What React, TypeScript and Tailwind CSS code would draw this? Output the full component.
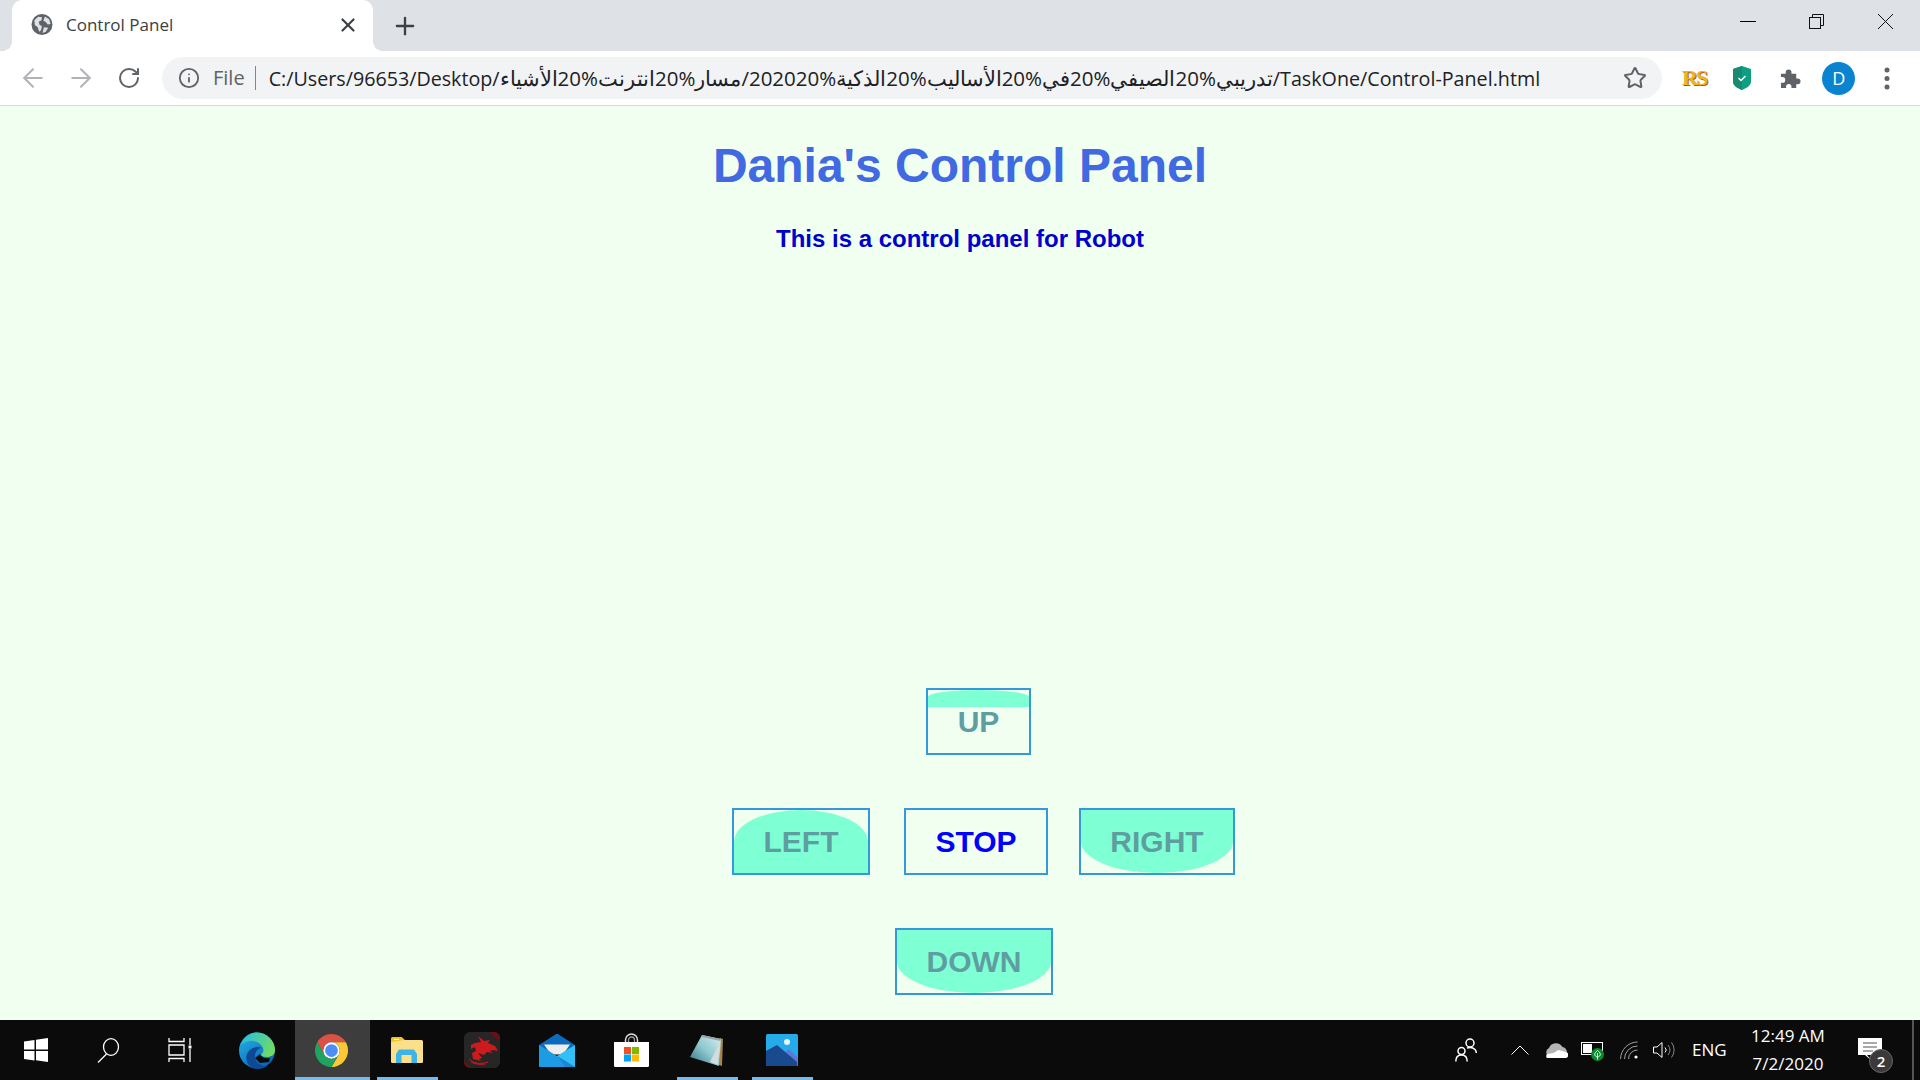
import React from 'react'
import { ArrowLeft, ArrowRight, Info, Plus, RotateCw, Star, X } from 'lucide-react'

const sans = "font-['Open_Sans',sans-serif]"
const arial = "font-['Liberation_Sans',Arial,sans-serif]"

const GlobeIcon = () => (
  <svg width="22" height="21" viewBox="0 0 22 22">
    <circle cx="11" cy="11" r="11" fill="#5f6368" />
    <path d="M3 6.5l4-3.500 4 .5-.5 3-3 1.500 1 3.500 2.500 1-1 4.500-2 1.500-1.500-4.500-3-2.500zM14 2.500l4.500 3 1.500 5-3 .5-2-2.500-2.500-1.500zM13 14l4.500.5-2.500 4-3.500 1.500z" fill="#dee1e6" />
  </svg>
)

const ShieldIcon = () => (
  <svg width="18" height="24" viewBox="0 0 18 24">
    <path d="M9 0l9 3v13c0 3-4 6-9 8-5-2-9-5-9-8v-13z" fill="#0e9f82" />
    <path d="M9 0l-9 3v13c0 3 4 6 9 8z" fill="#168a72" />
    <path d="M5.500 12l2.500 2.500 4.500-4.500" fill="none" stroke="#fff" strokeWidth="1.500" />
  </svg>
)

const PuzzleIcon = () => (
  <svg width="21" height="21" viewBox="0 0 22 22">
    <path d="M1 6h5v-1.500a3 3 0 0 1 6 0v1.500h5v5h1.500a3 3 0 0 1 0 6h-1.500v4h-5v-1.500a2.800 2.800 0 0 0-5.600 0v1.500h-5.400v-5.500h1.500a3 3 0 0 0 0-6h-1.500z" fill="#5f6368" />
  </svg>
)

const WindowsIcon = () => (
  <svg width="24" height="24" viewBox="0 0 24 24">
    <path d="M0 3.500l10.500-1.500v9.500h-10.500zM12 1.700l12-1.700v11.500h-12zM0 13h10.500v9.500l-10.500-1.500zM12 13h12v11l-12-1.700z" fill="#fff" />
  </svg>
)

const SearchIcon = () => (
  <svg width="24" height="25" viewBox="0 0 24 25" fill="none" stroke="#fff" strokeWidth="1.300">
    <ellipse cx="15" cy="9" rx="7.500" ry="8.300" />
    <path d="M10.500 16l-8.500 8.500" />
  </svg>
)

const TaskViewIcon = () => (
  <svg width="24" height="24" viewBox="0 0 24 24" fill="none" stroke="#fff" strokeWidth="1.300">
    <path d="M1 0v3.500h15v-3.500M1 7h15v10h-15zM1 24v-3.500h15v3.500M22 0v7M22 11v13" />
    <rect x="20.500" y="7.500" width="3" height="3" fill="#fff" stroke="none" />
  </svg>
)

const EdgeIcon = () => (
  <svg width="36" height="37" viewBox="0 0 36 37">
    <defs>
      <linearGradient id="edgeA" x1="0" y1="0" x2="0.700" y2="1">
        <stop offset="0" stopColor="#25b6e6" />
        <stop offset="1" stopColor="#0b62b6" />
      </linearGradient>
      <linearGradient id="edgeB" x1="0" y1="0.300" x2="1" y2="0.700">
        <stop offset="0" stopColor="#2bbfdc" />
        <stop offset="1" stopColor="#74dc5c" />
      </linearGradient>
    </defs>
    <circle cx="18" cy="18.500" r="18" fill="url(#edgeA)" />
    <path d="M18 .5C28 .5 36 9 36 18c0 5-4 7-8 7-4 0-6-1-6-3 2-1 3-3 2-6-2-5-8-8-14-7-3 .5-6 2-8 4 3-8 9-12.500 16-12.500z" fill="url(#edgeB)" />
    <path d="M21 22c1 3 5 5 10 4l-1 4-9 1-5-5z" fill="#0b0b0b" />
    <path d="M13 36c-6-4-7-11-4-16 3-5 10-6 14-4-3 0-7 3-7 8 0 6 6 11 13 10-5 3-11 3.500-16 2z" fill="#0d4a95" />
  </svg>
)

const ChromeIcon = () => (
  <svg width="33" height="33" viewBox="2 2 44 44">
    <path d="M4.950 13A22 22 0 0 1 43.050 13H24A11 11 0 0 0 14.470 29.500z" fill="#dd5144" />
    <path d="M43.050 13A22 22 0 0 1 24 46L33.530 29.500A11 11 0 0 0 24 13z" fill="#fcc934" />
    <path d="M24 46A22 22 0 0 1 4.950 13L14.470 29.500A11 11 0 0 0 33.530 29.500z" fill="#1ea362" />
    <circle cx="24" cy="24" r="11" fill="#fff" />
    <circle cx="24" cy="24" r="8.500" fill="#4d8df6" />
  </svg>
)

const FolderIcon = () => (
  <svg width="32" height="26" viewBox="0 0 32 26">
    <path d="M0 1.500a1.500 1.500 0 0 1 1.500-1.500h9l3 2.500v3h-13.500z" fill="#f2c12e" />
    <path d="M3 2h5v1h-5z" fill="#fff" />
    <path d="M0 5l13-2h17.500a1.500 1.500 0 0 1 1.500 1.500v20a1.500 1.500 0 0 1-1.500 1.500h-29a1.500 1.500 0 0 1-1.500-1.500z" fill="#fbe08c" />
    <path d="M5 17l3-4.500h15l3 4.500v9h-5.500v-8h-10v8h-5.500z" fill="#3cb4e8" />
  </svg>
)

const DragonIcon = () => (
  <svg width="36" height="36" viewBox="0 0 36 36">
    <rect width="36" height="36" rx="6" fill="#262626" />
    <path d="M26 0h4a6 6 0 0 1 6 6v4zM0 28l7 8h-1a6 6 0 0 1-6-6z" fill="#6e0d14" />
    <path d="M14 4l6 5 6-1-2 3 7 3 3 5-5-1-3 1 3 2-6-1-3 3-6-2 4 5-3 1 2 2-8-2-1-6 4-2-1-4-4 2 0-4 4-2 6-1z" fill="#cc1a1f" />
    <path d="M5 27c4 4 11 6 19 3M7 30c4 2 9 3 14 2" fill="none" stroke="#cc1a1f" strokeWidth="1" />
  </svg>
)

const MailIcon = () => (
  <svg width="36" height="33" viewBox="0 0 36 33">
    <path d="M16 .8a3 3 0 0 1 4 0l16 10.200v6h-36v-6z" fill="#0d6bbd" />
    <path d="M5 10.500h26l-7 10h-12z" fill="#eeeeee" />
    <path d="M36 11v22h-36z" fill="#30c0f5" />
    <path d="M0 11l36 22h-35a1 1 0 0 1-1-1z" fill="#1d9be4" />
    <path d="M19 22.500l17 10.500h-10z" fill="#1a86d4" />
  </svg>
)

const StoreIcon = () => (
  <svg width="35" height="34" viewBox="0 0 35 34">
    <path d="M11.500 10v-3a6 6 0 0 1 12 0v3" fill="none" stroke="#dcdcdc" strokeWidth="1.500" />
    <path d="M14.500 10v-3a3 3 0 0 1 6 0v3" fill="none" stroke="#9a9a9a" strokeWidth="1.300" />
    <path d="M0 9h35v23.500a1.500 1.500 0 0 1-1.500 1.500h-32a1.500 1.500 0 0 1-1.500-1.500z" fill="#fff" />
    <rect x="10" y="14" width="7" height="7" fill="#f25022" />
    <rect x="18" y="14" width="7" height="7" fill="#7fba00" />
    <rect x="10" y="21.500" width="7" height="7" fill="#00a4ef" />
    <rect x="18" y="21.500" width="7" height="7" fill="#ffb900" />
  </svg>
)

const NotepadIcon = () => (
  <svg width="33" height="32" viewBox="0 0 33 32">
    <defs>
      <linearGradient id="padA" x1="0" y1="1" x2="1" y2="0">
        <stop offset="0" stopColor="#2f6f7a" />
        <stop offset="0.500" stopColor="#8ec8d0" />
        <stop offset="1" stopColor="#d8eef0" />
      </linearGradient>
    </defs>
    <path d="M30 4l3 1-1 27-3-1z" fill="#a4854d" />
    <path d="M12 1l19 4-2 27-29-9z" fill="url(#padA)" />
    <path d="M30 8l-2 23-8-3z" fill="#d3dde0" />
    <path d="M12 1l19 4-.5 2-19-4z" fill="#9aa4a8" />
  </svg>
)

const PhotosIcon = () => (
  <svg width="32" height="32" viewBox="0 0 32 32">
    <rect width="32" height="32" rx="1.500" fill="#25aaea" />
    <circle cx="21" cy="8" r="3" fill="#e8f6fd" />
    <path d="M23 15l9 9v6.500a1.500 1.500 0 0 1-1.500 1.500h-9.500l-6-10z" fill="#5f77d6" />
    <path d="M0 17l11-6 20 17v4h-29.500a1.500 1.500 0 0 1-1.500-1.500z" fill="#1a4a8e" />
  </svg>
)

const PeopleIcon = () => (
  <svg width="22" height="24" viewBox="0 0 22 24" fill="none" stroke="#fff" strokeWidth="1.500">
    <circle cx="15" cy="5" r="4" />
    <circle cx="6.500" cy="13" r="3.500" />
    <path d="M.8 23.500c0-4 2.200-6.500 5.700-6.500s5.700 2.500 5.700 6.500M12 10c3-1 6-.5 8 1.500 1 1 1.300 2 1.300 3.500" />
  </svg>
)

const CloudIcon = () => (
  <svg width="24" height="16" viewBox="0 0 24 16">
    <path d="M5 15a5 5 0 0 1 0-9 7.500 7.500 0 0 1 13.500-1 5.500 5.500 0 0 1 2 10z" fill="#b5b5b5" />
    <path d="M3 16h18a3 3 0 0 0 .5-6l-7-2-5 3-6 1a2.500 2.500 0 0 0-.5 4z" fill="#fff" />
  </svg>
)

const BatteryIcon = () => (
  <svg width="23" height="19" viewBox="0 0 23 19">
    <rect x="0.500" y="0.500" width="21" height="12" fill="#0b0b0b" stroke="#fff" />
    <rect x="2" y="2" width="9" height="9" fill="#fff" />
    <circle cx="16.500" cy="12.500" r="6.500" fill="#0a8a2a" />
    <path d="M16.500 8.500c2 1.500 2.800 3 2.800 4s-1.300 2.500-2.800 2.500-2.800-1.500-2.800-2.500 .8-2.500 2.800-4zM16.500 11v6.500" fill="none" stroke="#fff" strokeWidth="1" />
  </svg>
)

const WifiIcon = () => (
  <svg width="18" height="18" viewBox="0 0 18 18" fill="none" stroke="#a0a0a0" strokeWidth="1">
    <path d="M.6 18a17 17 0 0 1 17-17M4.500 18a13 13 0 0 1 13-13M8.500 18a9 9 0 0 1 9-9" />
    <circle cx="16" cy="16" r="1.600" fill="#fff" stroke="none" />
  </svg>
)

const VolumeIcon = () => (
  <svg width="22" height="16" viewBox="0 0 22 16" fill="none" stroke="#fff" strokeWidth="1">
    <path d="M.5 5h3.500l5-4.500v15l-5-4.500h-3.500z" />
    <path d="M12 5.500a3.500 3.500 0 0 1 0 5" />
    <path d="M15 3a8 8 0 0 1 0 10M18.500 .5a12 12 0 0 1 0 15" stroke="#888" />
  </svg>
)

const NotifyIcon = () => (
  <div className="relative w-[35px] h-[35px]">
    <svg width="24" height="24" viewBox="0 0 24 24">
      <path d="M0 0h24v17h-14l-1 0 5 6-7-6h-7z" fill="#fff" />
      <path d="M5 5h14M5 9h14M5 13h10" stroke="#555" strokeWidth="1" />
    </svg>
    <span className={`absolute left-[11px] top-[11px] w-[24px] h-[24px] rounded-full bg-[#3a3a3a] border border-[#666] text-white text-[15px] font-semibold flex items-center justify-center ${sans}`}>
      2
    </span>
  </div>
)

type FillKind = 'none' | 'strip' | 'top' | 'bottom'

const NavButton = ({ label, width, fill, color }: { label: string; width: string; fill: FillKind; color: string }) => (
  <button className={`relative ${width} h-[67px] border-2 border-[#3498db] overflow-hidden flex items-center justify-center bg-[#f0fff0]`}>
    {fill === 'strip' && <span className="absolute top-0 left-0 right-0 h-[17px] bg-[#7fffd4] rounded-t-[50%_7px]" />}
    {fill === 'top' && <span className="absolute inset-0 bg-[#7fffd4] rounded-t-[50%]" />}
    {fill === 'bottom' && <span className="absolute inset-0 bg-[#7fffd4] rounded-b-[50%]" />}
    <span className={`relative -mt-[1px] text-[30px] font-bold ${arial} ${color}`}>{label}</span>
  </button>
)

const TaskbarSlot = ({ children, active, underline }: { children: React.ReactNode; active?: boolean; underline?: boolean }) => (
  <div className={`relative w-[75px] h-[60px] flex items-center justify-center pr-[2px] ${active ? 'bg-[#3d3d3d]' : ''}`}>
    {children}
    {underline && <span className={`absolute bottom-0 h-[3px] bg-[#76b9ed] ${active ? 'left-0 right-0' : 'left-[7px] right-[7px]'}`} />}
  </div>
)

export default function App() {
  return (
    <div className="w-[1920px] h-[1080px] overflow-hidden flex flex-col bg-[#f0fff0]">
      {/* tab strip */}
      <div className="h-[51px] bg-[#dee1e6] flex items-end shrink-0">
        <div className="relative ml-[12px] w-[361px] h-[51px] bg-white rounded-t-[10px] flex items-center pl-[19px] pr-[14px] pb-[2px]">
          <span className="absolute left-[-10px] bottom-0 w-[10px] h-[10px] bg-[radial-gradient(circle_at_0_0,#dee1e6_10px,#fff_10px)]" />
          <span className="absolute right-[-10px] bottom-0 w-[10px] h-[10px] bg-[radial-gradient(circle_at_100%_0,#dee1e6_10px,#fff_10px)]" />
          <GlobeIcon />
          <span className={`ml-[13px] text-[17px] text-[#3c4043] ${sans}`}>Control Panel</span>
          <X size={22} strokeWidth={2.4} className="ml-auto text-[#3c4043]" />
        </div>
        <Plus size={28} strokeWidth={2} className="ml-[18px] mb-[11px] text-[#3c4043]" />
        <div className="ml-auto flex items-center h-[51px] pb-[8px]">
          <div className="w-[69px] flex justify-center"><span className="w-[16px] h-px bg-black" /></div>
          <div className="w-[69px] flex justify-center">
            <svg width="15" height="15" viewBox="0 0 15 15" fill="none" stroke="#111" strokeWidth="1">
              <rect x="0.500" y="3.500" width="11" height="11" />
              <path d="M3.500 3.500v-3h11v11h-3" />
            </svg>
          </div>
          <div className="w-[69px] flex justify-center">
            <svg width="15" height="15" viewBox="0 0 15 15" stroke="#111" strokeWidth="1"><path d="M0 0l15 15M15 0l-15 15" /></svg>
          </div>
        </div>
      </div>

      {/* toolbar */}
      <div className="h-[55px] bg-white border-b border-[#d5dbd5] flex items-center shrink-0">
        <div className="ml-[9px] w-[48px] flex justify-center"><ArrowLeft size={30} strokeWidth={1.6} className="text-[#b0b3b8]" /></div>
        <div className="w-[48px] flex justify-center"><ArrowRight size={30} strokeWidth={1.6} className="text-[#b0b3b8]" /></div>
        <div className="w-[48px] flex justify-center"><RotateCw size={24} strokeWidth={2} className="text-[#5f6368]" /></div>
        <div className="ml-[9px] w-[1500px] h-[42px] rounded-full bg-[#f1f3f4] flex items-center pl-[16px]">
          <Info size={22} strokeWidth={2} className="text-[#5f6368]" />
          <span className={`ml-[13px] text-[20px] text-[#5f6368] ${sans}`}>File</span>
          <span className="ml-[10px] w-px h-[24px] bg-[#80868b]" />
          <span dir="ltr" className={`ml-[13px] text-[19.7px] text-[#202124] whitespace-nowrap ${sans}`}>
            C:/Users/96653/Desktop/<span className="text-[20.5px]">تدريبي%20الصيفي%20في%20الأساليب%20الذكية%202020/مسار%20انترنت%20الأشياء</span>/TaskOne/Control-Panel.html
          </span>
          <Star size={24} strokeWidth={2} className="ml-auto mr-[15px] text-[#5f6368]" />
        </div>
        <div className="ml-[8px] w-[48.2px] flex justify-center">
          <span className="text-[22px] leading-[20px] font-bold text-[#f0b323] tracking-[-2px] font-['Liberation_Serif',serif] [text-shadow:1px_1px_0_#a8551a]">RS</span>
        </div>
        <div className="w-[48.2px] flex justify-center"><ShieldIcon /></div>
        <div className="w-[48.2px] flex justify-center"><PuzzleIcon /></div>
        <div className="w-[48.2px] flex justify-center">
          <div className={`w-[33px] h-[33px] rounded-full bg-[#0a84d0] text-white text-[18px] flex items-center justify-center ${sans}`}>D</div>
        </div>
        <div className="w-[48.2px] flex justify-center">
          <svg width="6" height="23" viewBox="0 0 6 23" fill="#5f6368">
            <circle cx="3" cy="3" r="2.500" />
            <circle cx="3" cy="11.500" r="2.500" />
            <circle cx="3" cy="20" r="2.500" />
          </svg>
        </div>
      </div>

      {/* page */}
      <div className="flex-1 flex flex-col">
        <h1 className={`mt-[32px] text-center text-[48px] leading-[56px] font-bold text-[#4169e1] ${arial}`}>Dania's Control Panel</h1>
        <p className={`mt-[31px] text-center text-[24px] leading-[28px] font-bold text-[#0000cd] ${arial}`}>This is a control panel for Robot</p>
        <div className="mt-[435px] ml-[926px]">
          <NavButton label="UP" width="w-[105px]" fill="strip" color="text-[#5f9ea0]" />
        </div>
        <div className="mt-[53px] ml-[732px] flex">
          <NavButton label="LEFT" width="w-[138px]" fill="top" color="text-[#5f9ea0]" />
          <div className="ml-[34px]"><NavButton label="STOP" width="w-[144px]" fill="none" color="text-[#0000ff]" /></div>
          <div className="ml-[31px]"><NavButton label="RIGHT" width="w-[156px]" fill="bottom" color="text-[#5f9ea0]" /></div>
        </div>
        <div className="mt-[53px] ml-[895px]">
          <NavButton label="DOWN" width="w-[158px]" fill="bottom" color="text-[#5f9ea0]" />
        </div>
      </div>

      {/* taskbar */}
      <div className="h-[60px] bg-[#0b0b0b] flex items-center shrink-0">
        <div className="w-[72px] flex justify-center"><WindowsIcon /></div>
        <div className="w-[72px] flex justify-center"><SearchIcon /></div>
        <div className="w-[76px] flex justify-center pr-[4px]"><TaskViewIcon /></div>
        <TaskbarSlot><EdgeIcon /></TaskbarSlot>
        <TaskbarSlot active underline><ChromeIcon /></TaskbarSlot>
        <TaskbarSlot underline><FolderIcon /></TaskbarSlot>
        <TaskbarSlot><DragonIcon /></TaskbarSlot>
        <TaskbarSlot><MailIcon /></TaskbarSlot>
        <TaskbarSlot><StoreIcon /></TaskbarSlot>
        <TaskbarSlot underline><NotepadIcon /></TaskbarSlot>
        <TaskbarSlot underline><PhotosIcon /></TaskbarSlot>
        <div className="ml-auto flex items-center h-full">
          <PeopleIcon />
          <svg className="ml-[34px]" width="18" height="10" viewBox="0 0 18 10" fill="none" stroke="#fff" strokeWidth="1"><path d="M.5 9.500l8.500-8.500 8.500 8.500" /></svg>
          <div className="ml-[15px]"><CloudIcon /></div>
          <div className="ml-[13px] mt-[2px]"><BatteryIcon /></div>
          <div className="ml-[16px]"><WifiIcon /></div>
          <div className="ml-[15px]"><VolumeIcon /></div>
          <span className={`ml-[17px] w-[33px] text-[17px] text-white whitespace-nowrap ${sans}`}>ENG</span>
          <div className={`ml-[25px] w-[76px] text-[17px] leading-[28px] text-white text-center whitespace-nowrap ${sans}`}>
            <div>12:49 AM</div>
            <div>7/2/2020</div>
          </div>
          <div className="ml-[32px] mt-[11px]"><NotifyIcon /></div>
          <span className="ml-[19px] mr-[6px] w-[2px] h-full bg-[#555]" />
        </div>
      </div>
    </div>
  )
}
